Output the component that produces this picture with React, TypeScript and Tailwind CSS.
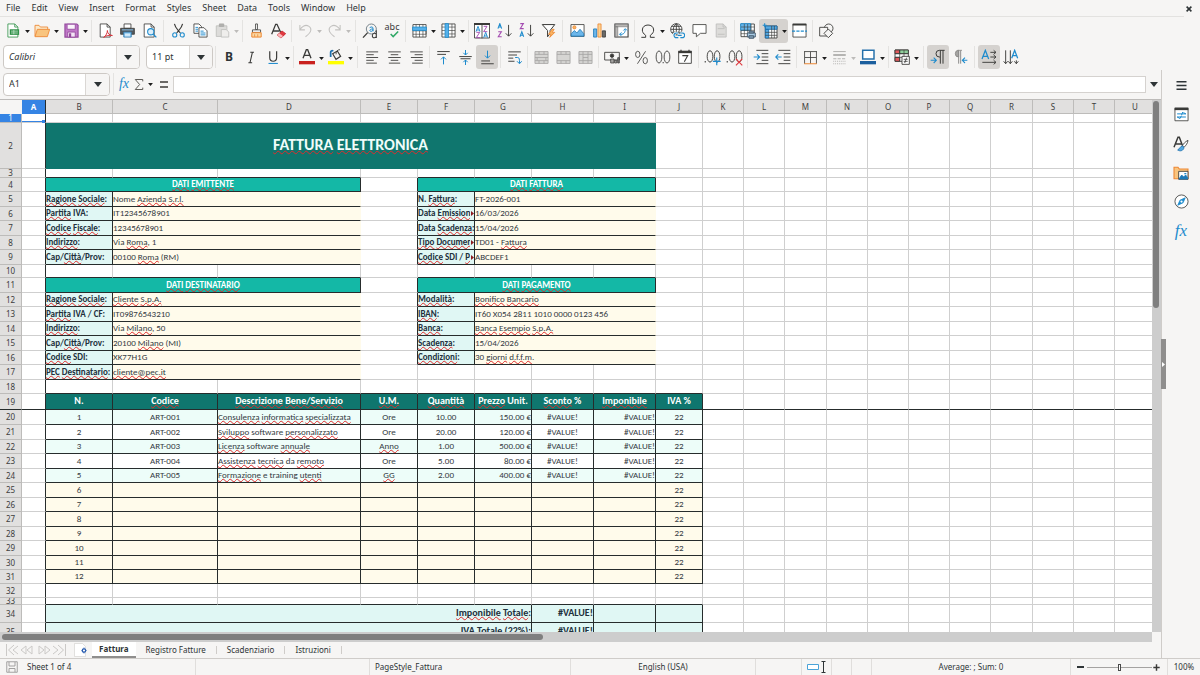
import React from 'react';

const INK = '#3a3a38';
const BLUE = '#1e8bcd';
const DIM = '#bdbcba';

function Svg({ children, className = 'size-[15px]' }: { children: React.ReactNode; className?: string }) {
  return (
    <svg viewBox="0 0 24 24" className={className} fill="none" stroke={INK} strokeWidth="1.3" aria-hidden="true">
      {children}
    </svg>
  );
}

/* ---------- standard toolbar icons ---------- */

const NewDoc = () => (
  <Svg>
    <path d="M3 1.500h11l5 5v16H3z" fill="#fff" stroke="#309048" />
    <path d="M14 1.500v5h5" stroke="#309048" />
    <path d="M6 10h15v9H6z" fill="#309048" stroke="none" />
    <path d="M8 13h11M8 16h11M12.500 11v7" stroke="#bfe3c8" />
  </Svg>
);
const OpenDoc = () => (
  <Svg className="size-[16px]">
    <path d="M1.500 20V3.500h6l2 2.500h11v4" fill="#fbe9c9" stroke="#ed8733" />
    <path d="M1.500 20.500 5 9.500h18.500l-3.500 11z" fill="#f9c47e" stroke="#ed8733" />
  </Svg>
);
const SaveDoc = () => (
  <Svg>
    <path d="M1.500 1.500h19l2 2v19h-21z" fill="#c078c8" stroke="#92479b" strokeWidth="1.800" />
    <path d="M5 2h13v8H5z" fill="#fbf4fc" stroke="#92479b" />
    <path d="M6 14.500h12v8H6z" fill="#f4e5f6" stroke="#92479b" />
    <path d="M8 16.500h3.500v6H8z" fill="#92479b" stroke="none" />
  </Svg>
);
const Pdf = () => (
  <Svg>
    <path d="M3.500 1.500h11l5 5v16h-16z" fill="#fff" />
    <path d="M14.500 1.500v5h5" />
    <path d="M9 23c4-3 6-7 6-11 0 4 3 8 8 8-5-1-10 0-14 3z" stroke="#d8343c" strokeWidth="1.600" fill="#fff" />
  </Svg>
);
const Print = () => (
  <Svg>
    <path d="M6.500 1.500h11v7h-11z" fill="#fff" />
    <path d="M1 8.500h22v9.500H1z" fill="#54595e" />
    <path d="M3 11h18" stroke="#8bc5ee" strokeWidth="1.500" />
    <path d="M6 14.500h12v8H6z" fill="#8ec8f0" stroke="#2b78ad" />
    <path d="M8 18h8M8 20.500h8" stroke="#fff" />
  </Svg>
);
const Preview = () => (
  <Svg>
    <path d="M3.500 1.500h11l5 5v16h-16z" fill="#fff" />
    <path d="M14.500 1.500v5h5" />
    <circle cx="14" cy="14" r="5" stroke={BLUE} fill="#dceefa" strokeWidth="1.700" />
    <path d="m18 18 5 5" stroke={BLUE} strokeWidth="2" />
  </Svg>
);
const Cut = () => (
  <Svg>
    <path d="M5.500 1.500c1 6 5 9 9.500 14.500M18.500 1.500c-1 6-5 9-9.500 14.500" strokeWidth="1.800" />
    <circle cx="6" cy="19" r="3.300" stroke={BLUE} strokeWidth="1.700" />
    <circle cx="18" cy="19" r="3.300" stroke={BLUE} strokeWidth="1.700" />
  </Svg>
);
const Copy = () => (
  <Svg>
    <path d="M1.500 1.500h8l4 4v11h-12z" fill="#fff" />
    <path d="M9.500 7.500h8l5 5v10h-13z" fill="#fff" />
    <path d="M4 7h4M4 10h4M4 13h4M12 13h5M12 16h8M12 19h8" stroke={BLUE} strokeWidth="1.500" />
  </Svg>
);
const Paste = () => (
  <Svg>
    <path d="M2 4.500h17v17H2z" fill="#dddcda" stroke={DIM} />
    <path d="M7 1.500h7v4H7z" fill="#b2b1af" stroke="#a9a8a6" />
    <path d="M10 10.500h8l4 4v8H10z" fill="#efeeec" stroke={DIM} />
  </Svg>
);
const Brush = () => (
  <Svg>
    <path d="M10.500 1.500h3v9h-3z" fill="#fff" />
    <path d="M5.500 11h13v4h-13z" fill="#fff" />
    <path d="M4.500 15.500h15v7h-15z" fill="#fbd9a5" stroke="#ed8733" strokeWidth="1.600" />
    <path d="M9 18v4M14 18v4" stroke="#ed8733" />
  </Svg>
);
const ClearFmt = () => (
  <Svg className="size-[16px]">
    <path d="M2.500 17 8.500 2h2L16 14M5 12h9" strokeWidth="1.900" />
    <path d="m11 18 7-6 5.500 4-7 6.500z" fill="#e0393f" stroke="#c9252d" />
    <path d="m11 18 3-2.500 5.500 4-3 3z" fill="#fbb9bb" stroke="none" />
  </Svg>
);
const Undo = () => (
  <Svg>
    <path d="M3 3v8h8M3 11C6 5 12 2 17 5s6 9-5 17" stroke="#c3c2c0" strokeWidth="1.700" />
  </Svg>
);
const Redo = () => (
  <Svg>
    <path d="M21 3v8h-8M21 11C18 5 12 2 7 5s-6 9 5 17" stroke="#c3c2c0" strokeWidth="1.700" />
  </Svg>
);
const FindReplace = () => (
  <Svg className="size-[16px]">
    <circle cx="14" cy="9" r="7.500" stroke="#66747c" />
    <path d="M8.500 14.500 1.500 22" strokeWidth="2" />
    <path d="M11.500 7c3-2 5-1 5 1v4.500M16.500 9c-5-.500-6 3.500-3 3.500 1.500 0 3-1 3-2.500" stroke={BLUE} strokeWidth="1.500" />
    <path d="M21.500 11v11.500M21.500 18c0-4-6-3.500-6 1s6 4 6 0" strokeWidth="1.600" />
  </Svg>
);
const Spell = () => (
  <span className="flex flex-col items-center leading-none">
    <span className="text-[9px] leading-[8px] text-[#3a3a38]">abc</span>
    <svg viewBox="0 0 12 8" className="h-[7px] w-[10px] self-end" fill="none" stroke="#2fa866" strokeWidth="1.800" aria-hidden="true">
      <path d="m2 3.500 3 3 6-6" />
    </svg>
  </span>
);
const RowIcon = () => (
  <Svg>
    <path d="M1.500 2.500h21v20h-21z" fill="#fff" />
    <path d="M1.500 12.500h21v5.500h-21M6.500 2.500v20M12 2.500v20M17.500 2.500v20" strokeWidth="1" />
    <path d="M1 6.500h22V12H1z" fill="#55b0ea" stroke={BLUE} />
  </Svg>
);
const ColIcon = () => (
  <Svg>
    <path d="M1.500 1.500h21v21h-21z" fill="#fff" />
    <path d="M1.500 6.500h21M1.500 12h21M1.500 17.500h21M17.500 1.500v21" strokeWidth="1" />
    <path d="M6.500 1h5.500v22H6.500z" fill="#55b0ea" stroke={BLUE} />
  </Svg>
);
const letterA = (x: number, y: number) => `M${x} ${y + 8}l3-8 3 8M${x + 1} ${y + 5.5}h4`;
const letterZ = (x: number, y: number) => `M${x} ${y}h5l-5 8h5.500`;
const SortIcon = () => (
  <Svg className="size-[16px]">
    <path d="M.700 1.500h22.600v21H.700zM12 2v21" fill="#fff" />
    <path d="M0 1.500h24" strokeWidth="3" />
    <path d={letterA(3, 5)} stroke={BLUE} strokeWidth="1.400" />
    <path d={letterZ(3.5, 14)} stroke="#a34ab0" strokeWidth="1.400" />
    <path d={letterZ(14.5, 5)} stroke="#a34ab0" strokeWidth="1.400" />
    <path d={letterA(14.5, 14)} stroke={BLUE} strokeWidth="1.400" />
  </Svg>
);
const SortAsc = () => (
  <Svg>
    <path d={letterA(1.5, 1)} stroke={BLUE} strokeWidth="1.700" />
    <path d={letterZ(2, 14)} stroke="#a34ab0" strokeWidth="1.700" />
    <path d="M18.500 3v18M14 16.500l4.500 4.500 4.500-4.500" strokeWidth="1.500" />
  </Svg>
);
const SortDesc = () => (
  <Svg>
    <path d={letterZ(2, 1)} stroke="#a34ab0" strokeWidth="1.700" />
    <path d={letterA(1.5, 14)} stroke={BLUE} strokeWidth="1.700" />
    <path d="M18.500 3v18M14 16.500l4.500 4.500 4.500-4.500" strokeWidth="1.500" />
  </Svg>
);
const Filter = () => (
  <Svg>
    <path d="M2 2.500h20L14.500 12v5l-4 5V12z" fill="#fff" strokeWidth="1.600" />
    <path d="m18 10-6 8h4l-2 5 8-8h-4l3-5z" fill="#f9b563" stroke="#ed8733" />
  </Svg>
);
const Picture = () => (
  <Svg>
    <path d="M1.500 2.500h21v19h-21z" fill="#fff" />
    <circle cx="7" cy="7" r="2.500" fill="#f9b563" stroke="#ed8733" />
    <path d="M2 21v-4l5-5 4 4 5-6 6 7v4z" fill="#6cb6ea" stroke="#1c79b8" />
  </Svg>
);
const Chart = () => (
  <Svg>
    <path d="M2.500 9.500h5v13h-5z" fill="#6cb6ea" stroke="#1c79b8" />
    <path d="M9.500 1.500h5v21h-5z" fill="#fbd292" stroke="#ed8733" />
    <path d="M16.500 12.500h5v10h-5z" fill="#6c6a68" />
  </Svg>
);
const Pivot = () => (
  <Svg>
    <path d="M1.500 1.500h21v21h-21z" fill="#fff" strokeWidth="1.700" />
    <path d="M2 2h20v4H2zM2 6h4v16H2z" fill="#b9b7b5" stroke="#777" strokeWidth="1" />
    <path d="M9 18c6 1 9-2 9-8M15 12l3-3 3 3M12 15l-3 3 3 3" stroke={BLUE} strokeWidth="1.500" />
  </Svg>
);
const Omega = () => (
  <Svg className="size-[16px]">
    <path d="M2 21.500h6.500v-3C5 16 3.500 13.500 3.500 10.500c0-10 17-10 17 0 0 3-1.500 5.500-5 8v3H22" strokeWidth="1.500" />
  </Svg>
);
const LinkIcon = () => (
  <Svg className="size-[16px]">
    <circle cx="11" cy="9.500" r="8.500" fill="#fff" />
    <path d="M2.500 9.500h17M11 1v16M11 1C5 6 5 13 11 18M11 1c6 5 6 12 0 17M4 5h14M4 14h14" />
    <path d="M14 15h-3a3.500 3.500 0 0 0 0 7h3M17 15h3a3.500 3.500 0 0 1 0 7h-3M13 18.500h6" stroke="#f6f5f4" strokeWidth="4" />
    <path d="M14 15h-3a3.500 3.500 0 0 0 0 7h3M17 15h3a3.500 3.500 0 0 1 0 7h-3M13 18.500h6" stroke={BLUE} strokeWidth="1.700" />
  </Svg>
);
const Comment = () => (
  <Svg>
    <path d="M1.500 2.500h21v14h-9L7 22v-5.500H1.500z" fill="#fff" />
  </Svg>
);
const HeaderFooter = () => (
  <Svg>
    <path d="M3.500 1.500h11l5 5v16h-16z" fill="#dddcda" stroke={DIM} />
    <path d="M14.500 1.500v5h5M6 18h11M6 9h11" stroke={DIM} />
  </Svg>
);
const PrintArea = () => (
  <Svg className="size-[16px]">
    <path d="M1.500 1.500h20v19h-20z" fill="#fff" />
    <path d="M1 1h15v10H1z" fill="#68b5ea" stroke={BLUE} />
    <path d="M1.500 6h20M1.500 11h20M1.500 16h20M6.500 1.500v19M11.500 1.500v19M16.500 1.500v19" strokeWidth=".9" />
    <path d="M11 15h12v6H11zM13.500 12.500h7V15h-7zM13.500 19h7v4h-7z" fill="#a9cce5" stroke="#41566a" />
  </Svg>
);
const Freeze = () => (
  <Svg className="size-[16px]">
    <path d="M5 4.500h17.500v18H5z" fill="#fff" />
    <path d="M5 4.500h17.500v5H5zM5 9.500h5v13H5z" fill="#55a9e2" stroke="#1c6fae" />
    <path d="M5 14h17.500M5 18.500h17.500M14.500 4.500v18M18.500 4.500v18" strokeWidth="1" />
    <path d="M1 3.500h6M4 .500v6" stroke={BLUE} strokeWidth="1.600" />
  </Svg>
);
const Split = () => (
  <Svg>
    <path d="M1.500 2h21v20.500h-21z" fill="#fff" />
    <path d="M1 2.500h22" strokeWidth="3" />
    <path d="M0 13h24" stroke={BLUE} strokeWidth="2" strokeDasharray="5 2" />
  </Svg>
);
const Shapes = () => (
  <Svg className="size-[16px]">
    <circle cx="16" cy="8" r="6.500" fill="#f6f5f4" />
    <path d="M2.500 6.500h12v13h-12z" fill="#f6f5f4" />
    <path d="m15.500 9 6.500 6.500-6.500 6.500L9 15.500z" fill="#f6f5f4" />
  </Svg>
);

/* ---------- formatting toolbar icons ---------- */

const Bold = () => <span className="text-[12px] leading-none font-bold text-[#2e3436]">B</span>;
const Italic = () => (
  <Svg>
    <path d="M10 3.500h6M7 20.500h6M13.500 3.500l-4 17" strokeWidth="1.700" />
  </Svg>
);
const Underline = () => (
  <Svg>
    <path d="M6 2v10c0 8 11 8 11 0V2" strokeWidth="1.900" />
    <path d="M4 21.500h15" stroke={BLUE} strokeWidth="1.700" />
  </Svg>
);
const FontColor = () => (
  <Svg className="size-[16px]">
    <path d="m6 14 5-13h2l5 13M8 9.500h8" strokeWidth="2" />
    <path d="M0 18h24v5H0z" fill="#c9211e" stroke="none" />
  </Svg>
);
const Highlight = () => (
  <Svg className="size-[16px]">
    <path d="m7 7 7-4 5 8-7 4.500z" fill="#f4f4f4" strokeWidth="1.700" />
    <path d="M4 12V5c0-2 1.500-3 4-2" stroke="#1c6fae" strokeWidth="2.600" />
    <path d="M12 8c0-4 2-7 6-7" />
    <path d="M0 18h24v5H0z" fill="#ffff00" stroke="none" />
  </Svg>
);
const Lines = ({ d }: { d: string }) => (
  <Svg>
    <path d={d} strokeWidth="1.400" />
  </Svg>
);
const AlignL = () => <Lines d="M2 3h19M2 7.500h12M2 12h19M2 16.500h12M2 21h17" />;
const AlignC = () => <Lines d="M2 3h20M6 7.500h12M2 12h20M6 16.500h12M3 21h18" />;
const AlignR = () => <Lines d="M2 3h20M9 7.500h13M3 12h19M9 16.500h13M5 21h17" />;
const VTop = () => (
  <Svg>
    <path d="M2 2.500h20M2 7h14" strokeWidth="1.500" />
    <path d="M12 23V11M8 15l4-4 4 4" stroke={BLUE} strokeWidth="1.600" />
  </Svg>
);
const VMid = () => (
  <Svg>
    <path d="M2 10.500h20M4 14h16" strokeWidth="1.500" />
    <path d="M12 0v8M8.500 4.500 12 8l3.500-3.500M12 24v-8M8.500 19.500 12 16l3.500 3.500" stroke={BLUE} strokeWidth="1.600" />
  </Svg>
);
const VBot = () => (
  <Svg>
    <path d="M2 22h20M2 17.500h14" strokeWidth="1.500" />
    <path d="M12 1v12M8 9l4 4 4-4" stroke={BLUE} strokeWidth="1.600" />
  </Svg>
);
const Wrap = () => (
  <Svg>
    <path d="M2 3h20M2 8h14M2 13h8M2 18h10" strokeWidth="1.500" />
    <path d="M13 12h4c3 0 3 3 3 9M16 18l4 4 3.500-4" stroke={BLUE} strokeWidth="1.600" />
  </Svg>
);
const Merge = ({ d }: { d: string }) => (
  <Svg>
    <path d="M1.500 2.500h21v19h-21z" fill="#d6d5d3" stroke="#a5a4a2" />
    <path d={d} stroke="#a5a4a2" />
  </Svg>
);
const Currency = () => (
  <Svg className="size-[16px]">
    <path d="M1 5h22v11.500H1z" fill="#f6f5f4" strokeWidth="1.300" />
    <circle cx="12" cy="10" r="2.600" fill={INK} />
    <path d="M10 15h5v6h-5zM16 17h3v4h-3z" fill="#a5a4a2" strokeWidth="1.100" />
    <path d="M20.500 13h2.500v8h-2.500z" fill="#777" strokeWidth="1.100" />
  </Svg>
);
const Percent = () => (
  <Svg>
    <ellipse cx="6" cy="7" rx="3.500" ry="5" />
    <ellipse cx="18" cy="17" rx="3.500" ry="5" />
    <path d="M18.500 2 5.500 22" />
  </Svg>
);
const Zeros = () => (
  <Svg className="size-[16px]">
    <ellipse cx="6" cy="12" rx="4.300" ry="9" />
    <ellipse cx="18" cy="12" rx="4.300" ry="9" />
    <path d="M11.500 20.500h1.500" strokeWidth="2" />
  </Svg>
);
const DateIcon = () => (
  <Svg className="size-[16px]">
    <path d="M2.500 3.500h19v18h-19z" fill="#fff" />
    <path d="M2 4.500h20" strokeWidth="3.500" />
    <path d="M6 1v5M18 1v5" strokeWidth="1.800" />
    <path d="M8 10h8l-5 9" strokeWidth="1.700" />
  </Svg>
);
const Decimals = ({ add }: { add: boolean }) => (
  <Svg className="size-[17px]">
    <path d="M1 18h1.500" strokeWidth="2" />
    <ellipse cx="8.500" cy="10.500" rx="4" ry="8" />
    <ellipse cx="18.500" cy="10.500" rx="4" ry="8" />
    {add ? (
      <path d="M18 12v11M12.500 17.500h11" stroke={BLUE} strokeWidth="1.600" />
    ) : (
      <path d="m14 14 9 9M23 14l-9 9" stroke="#e0393f" strokeWidth="1.600" />
    )}
  </Svg>
);
const IndentMore = () => (
  <Svg className="size-[16px]">
    <path d="M5 2h18M13 7h10M13 12h10M13 17h10M5 22h18" strokeWidth="1.400" />
    <path d="M1 12h9M6 8l4 4-4 4" stroke={BLUE} strokeWidth="1.600" />
  </Svg>
);
const IndentLess = () => (
  <Svg className="size-[16px]">
    <path d="M5 2h18M13 7h10M13 12h10M13 17h10M5 22h18" strokeWidth="1.400" />
    <path d="M10 12H1M5 8l-4 4 4 4" stroke={BLUE} strokeWidth="1.600" />
  </Svg>
);
const Borders = () => (
  <Svg>
    <path d="M2.500 2v20M21.500 2v20M2 2.500h20" />
    <path d="M12 3v19M3 12h18" />
    <path d="M2 22h20" stroke="#ed8733" strokeWidth="1.600" />
  </Svg>
);
const BorderStyle = () => (
  <Svg>
    <path d="M2 2.500h20" stroke="#b0afad" strokeWidth="1.500" />
    <path d="M2 8h20" stroke="#b0afad" strokeWidth="3" />
    <path d="M2 14h20" stroke="#b0afad" strokeWidth="1.500" strokeDasharray="5 2" />
    <path d="M2 18h20M2 22h20" stroke="#b0afad" strokeWidth="1.500" strokeDasharray="1.500 1.500" />
  </Svg>
);
const BorderColor = () => (
  <Svg className="size-[16px]">
    <path d="M4 2h17v13H4z" fill="#fff" stroke="#2470ab" strokeWidth="2.200" />
    <path d="M0 18h24v5H0z" fill="#1c5f9e" stroke="none" />
  </Svg>
);
const Conditional = () => (
  <Svg className="size-[16px]">
    <path d="M1.500 1.500h20v17h-20z" fill="#fff" />
    <path d="M1.500 1.500h7v5.500h-7zM1.500 12.500h7v6h-7z" fill="#e0575b" />
    <path d="M8.500 1.500h13V7h-13z" fill="#8fcf9c" />
    <path d="M1.500 7h20M1.500 12.500h20M8.500 1.500v17M15 1.500v17" strokeWidth="1" />
    <path d="M12 11h11v12H12z" fill="#fff" />
    <path d="M14.500 15.500h6M14.500 18.500h6M19 13l-3 8" strokeWidth="1.200" />
  </Svg>
);
const Ltr = () => (
  <Svg className="size-[16px]">
    <path d="M22 2h-8a5 5 0 0 0 0 10h1M15.500 2v20M19.500 2v20" strokeWidth="1.500" />
    <path d="M1 17h8M5.500 13l4 4-4 4" stroke={BLUE} strokeWidth="1.600" />
  </Svg>
);
const Rtl = () => (
  <Svg className="size-[16px]">
    <path d="M10 2a5 5 0 0 0 0 10zM10 2v20M13 2v20" fill="#a5a4a2" stroke="#8e8d8b" strokeWidth="1.500" />
    <path d="M8 2h7" stroke="#8e8d8b" />
    <path d="M23 17h-7M19.500 13l-4 4 4 4" stroke={BLUE} strokeWidth="1.600" />
  </Svg>
);
const TextHoriz = () => (
  <Svg className="size-[16px]">
    <path d="m1.500 15 5-13 5 13M3.500 11h6" stroke={BLUE} strokeWidth="1.900" />
    <path d="M14 5h8M19 2l3.500 3L19 8M14 12h8M19 9l3.500 3-3.500 3M2 20h20M19 17l3.500 3-3.500 3" strokeWidth="1.400" />
  </Svg>
);
const TextVert = () => (
  <Svg className="size-[16px]">
    <path d="m13 14 4.500-12L22 14M14.500 10h6" stroke={BLUE} strokeWidth="1.900" />
    <path d="M4 2v20M1 18.500 4 22l3-3.500M11 2v20M8 18.500l3 3.500 3-3.500M20 17v5M17 18.500l3 3.500 3-3.500" strokeWidth="1.400" />
  </Svg>
);

/* ---------- shared controls ---------- */

const Caret = ({ dim = false }: { dim?: boolean }) => (
  <svg viewBox="0 0 8 5" className="h-[3px] w-[5px]" fill={dim ? '#bdbcba' : '#1d1d1d'} aria-hidden="true">
    <path d="M0 0h8L4 5z" />
  </svg>
);
const BigCaret = () => (
  <svg viewBox="0 0 8 5" className="h-[5px] w-[8px]" fill="#2e3436" aria-hidden="true">
    <path d="M0 0h8L4 5z" />
  </svg>
);

function Tool({ label, icon, on = false, menu = false, dim = false }: { label: string; icon: React.ReactNode; on?: boolean; menu?: boolean; dim?: boolean }) {
  return (
    <div className={on ? 'flex h-[24px] rounded-[3px] bg-[#d5d2cf]' : 'flex h-[24px]'}>
      <button type="button" aria-label={label} className="flex w-[22px] items-center justify-center">
        {icon}
      </button>
      {menu && (
        <button type="button" aria-label={label + ' options'} className="flex w-[7px] items-center justify-center pt-[2px]">
          <Caret dim={dim} />
        </button>
      )}
    </div>
  );
}
function Sep({ wide = false }: { wide?: boolean }) {
  return (
    <div className={wide ? 'flex w-[7px] justify-center' : 'flex w-[5px] justify-center'}>
      <div className="h-[22px] w-px bg-[#e4e3e1]" />
    </div>
  );
}

const MENUS = ['File', 'Edit', 'View', 'Insert', 'Format', 'Styles', 'Sheet', 'Data', 'Tools', 'Window', 'Help'];

function MenuBar() {
  return (
    <div className="flex h-[17px] items-start justify-between">
      <nav className="flex h-full flex-1 gap-[11px] border-b border-[#e3e2e0] pl-[6px]">
        {MENUS.map((m) => (
          <button key={m} type="button" className="text-[9px] leading-[16px]">
            {m}
          </button>
        ))}
      </nav>
      <button type="button" aria-label="Close document" className="flex h-[17px] w-[16px] items-center justify-start">
        <svg viewBox="0 0 10 10" className="ml-[2px] size-[6px]" stroke="#2e3436" strokeWidth="2.600" aria-hidden="true">
          <path d="m1 1 8 8M9 1 1 9" />
        </svg>
      </button>
    </div>
  );
}

function StandardBar() {
  return (
    <div className="flex h-[27px] items-center pl-[2px]">
      <Tool label="New" icon={<NewDoc />} menu />
      <Tool label="Open" icon={<OpenDoc />} menu />
      <Tool label="Save" icon={<SaveDoc />} menu />
      <Sep />
      <Tool label="Export as PDF" icon={<Pdf />} />
      <Tool label="Print" icon={<Print />} />
      <Tool label="Print preview" icon={<Preview />} />
      <Sep wide />
      <Tool label="Cut" icon={<Cut />} />
      <Tool label="Copy" icon={<Copy />} />
      <Tool label="Paste" icon={<Paste />} menu dim />
      <Sep />
      <Tool label="Clone formatting" icon={<Brush />} />
      <Tool label="Clear formatting" icon={<ClearFmt />} />
      <Sep />
      <Tool label="Undo" icon={<Undo />} menu dim />
      <Tool label="Redo" icon={<Redo />} menu dim />
      <Sep wide />
      <Tool label="Find and replace" icon={<FindReplace />} />
      <Tool label="Spelling" icon={<Spell />} />
      <Sep />
      <Tool label="Row" icon={<RowIcon />} menu />
      <Tool label="Column" icon={<ColIcon />} menu />
      <Sep />
      <Tool label="Sort" icon={<SortIcon />} />
      <Tool label="Sort ascending" icon={<SortAsc />} />
      <Tool label="Sort descending" icon={<SortDesc />} />
      <Tool label="AutoFilter" icon={<Filter />} />
      <Sep wide />
      <Tool label="Image" icon={<Picture />} />
      <Tool label="Chart" icon={<Chart />} />
      <Tool label="Pivot table" icon={<Pivot />} />
      <Sep />
      <Tool label="Special character" icon={<Omega />} menu />
      <Tool label="Hyperlink" icon={<LinkIcon />} />
      <Tool label="Comment" icon={<Comment />} />
      <Tool label="Headers and footers" icon={<HeaderFooter />} />
      <Sep />
      <Tool label="Print area" icon={<PrintArea />} />
      <Tool label="Freeze rows and columns" icon={<Freeze />} menu on />
      <Tool label="Split window" icon={<Split />} />
      <Sep />
      <Tool label="Draw functions" icon={<Shapes />} />
    </div>
  );
}

function Combo({ label, value, box, text }: { label: string; value: string; box: string; text: string }) {
  return (
    <div className={'relative flex h-[24px] rounded-[4px] border border-[#cdc9c5] bg-white ' + box}>
      <select aria-label={label} defaultValue={value} className={'w-full appearance-none bg-transparent pl-[5px] text-[9px] outline-none ' + text}>
        <option>{value}</option>
      </select>
      <span className="pointer-events-none absolute inset-y-0 right-0 flex w-[23px] items-center justify-center rounded-r-[3px] border-l border-[#dad7d4] bg-[#f6f5f4]">
        <BigCaret />
      </span>
    </div>
  );
}

function FormatBar() {
  return (
    <div className="flex h-[26px] items-center pl-[3px]">
      <Combo label="Font name" value="Calibri" box="w-[137px]" text="italic" />
      <Combo label="Font size" value="11 pt" box="ml-[6px] w-[67px]" text="" />
      <Sep />
      <Tool label="Bold" icon={<Bold />} />
      <Tool label="Italic" icon={<Italic />} />
      <Tool label="Underline" icon={<Underline />} menu />
      <Sep />
      <Tool label="Font colour" icon={<FontColor />} menu />
      <Tool label="Highlighting" icon={<Highlight />} menu />
      <Sep wide />
      <Tool label="Align left" icon={<AlignL />} />
      <Tool label="Align centre" icon={<AlignC />} />
      <Tool label="Align right" icon={<AlignR />} />
      <Sep />
      <Tool label="Align top" icon={<VTop />} />
      <Tool label="Centre vertically" icon={<VMid />} />
      <Tool label="Align bottom" icon={<VBot />} on />
      <Sep />
      <Tool label="Wrap text" icon={<Wrap />} />
      <Sep />
      <Tool label="Merge and centre" icon={<Merge d="M1.500 7h21M1.500 12h21M1.500 17h21M8 2.500V7M16 2.500V7M8 17v4.500M16 17v4.500M5 12v5M19 12v5" />} />
      <Tool label="Merge cells" icon={<Merge d="M1.500 7h21M1.500 17h21M8 2.500V7M16 2.500V7M8 17v4.500M16 17v4.500" />} />
      <Tool label="Unmerge cells" icon={<Merge d="M1.500 7h21M1.500 17h21M8 2.500v19M16 2.500v19M8 12h8" />} />
      <Sep />
      <Tool label="Currency" icon={<Currency />} menu />
      <Tool label="Percent" icon={<Percent />} />
      <Tool label="Number" icon={<Zeros />} />
      <Tool label="Date" icon={<DateIcon />} />
      <Sep />
      <Tool label="Add decimal place" icon={<Decimals add />} />
      <Tool label="Delete decimal place" icon={<Decimals add={false} />} />
      <Sep />
      <Tool label="Increase indent" icon={<IndentMore />} />
      <Tool label="Decrease indent" icon={<IndentLess />} />
      <Sep />
      <Tool label="Borders" icon={<Borders />} menu />
      <Tool label="Border style" icon={<BorderStyle />} menu dim />
      <Tool label="Border colour" icon={<BorderColor />} menu />
      <Sep />
      <Tool label="Conditional formatting" icon={<Conditional />} menu />
      <Sep wide />
      <Tool label="Left to right" icon={<Ltr />} on />
      <Tool label="Right to left" icon={<Rtl />} />
      <Sep wide />
      <Tool label="Text direction horizontal" icon={<TextHoriz />} on />
      <Tool label="Text direction vertical" icon={<TextVert />} />
    </div>
  );
}

function FormulaBar() {
  return (
    <div className="flex h-[30px] items-center border-b border-[#bdbbb9] pb-px pl-[3px]">
      <div className="flex h-[23px] w-[107px] rounded-[4px] border border-[#cdc9c5] bg-white">
        <input aria-label="Name box" defaultValue="A1" className="w-full min-w-0 flex-1 rounded-l-[4px] pl-[5px] text-[9px] outline-none" />
        <button type="button" aria-label="Name list" className="flex w-[24px] items-center justify-center rounded-r-[3px] border-l border-[#dad7d4] bg-[#f6f5f4]">
          <BigCaret />
        </button>
      </div>
      <Sep wide />
      <button type="button" aria-label="Function wizard" className="w-[14px] font-['Liberation_Serif',serif] text-[14px] leading-none text-[#1e8bcd] italic">
        fx
      </button>
      <button type="button" aria-label="Select function" className="flex w-[24px] items-center justify-center gap-[4px]">
        <svg viewBox="0 0 16 20" className="h-[13px] w-[10px]" fill="none" stroke="#55534f" strokeWidth="1.500" aria-hidden="true">
          <path d="M14 5V2H2l7 8-7 8h12v-3" />
        </svg>
        <Caret />
      </button>
      <button type="button" aria-label="Formula" className="flex w-[18px] flex-col items-center gap-[3px]">
        <span className="h-[2px] w-[8px] bg-[#6b6966]" />
        <span className="h-[2px] w-[8px] bg-[#6b6966]" />
      </button>
      <input aria-label="Formula input" className="h-[17px] min-w-0 flex-1 border border-[#d5d2cf] bg-white px-[4px] text-[9px] outline-none" />
      <button type="button" aria-label="Expand formula bar" className="flex w-[15px] items-center justify-center">
        <BigCaret />
      </button>
    </div>
  );
}

/* ---------- spreadsheet ---------- */

const COLS: [string, string][] = [
  ['A', 'w-[24px]'], ['B', 'w-[67px]'], ['C', 'w-[105px]'], ['D', 'w-[143px]'], ['E', 'w-[57px]'],
  ['F', 'w-[57px]'], ['G', 'w-[57px]'], ['H', 'w-[62px]'], ['I', 'w-[62px]'], ['J', 'w-[47px]'],
  ['K', 'w-[41px]'], ['L', 'w-[41px]'], ['M', 'w-[42px]'], ['N', 'w-[41px]'], ['O', 'w-[41px]'],
  ['P', 'w-[41px]'], ['Q', 'w-[41px]'], ['R', 'w-[42px]'], ['S', 'w-[41px]'], ['T', 'w-[41px]'], ['U', 'w-[41px]'],
];

const HEIGHTS: Record<number, [string, string]> = {
  7: ['h-[7px]', 'h-[6px]'],
  9: ['h-[9px]', 'h-[8px]'],
  13: ['h-[13px]', 'h-[12px]'],
  14: ['h-[14px]', 'h-[13px]'],
  15: ['h-[15px]', 'h-[14px]'],
  16: ['h-[16px]', 'h-[15px]'],
  18: ['h-[18px]', 'h-[17px]'],
  46: ['h-[46px]', 'h-[45px]'],
};
const ROW_HEIGHTS = [
  9, 46, 9, 14, 15, 14, 15, 14, 15, 13, 15, 14, 15, 14, 15, 14, 15, 14, 16, 15, 15, 14, 15, 14, 15, 14, 15, 14, 15,
  14, 14, 14, 7, 18, 18,
];

type Cell = { text?: string; look: string; span?: number; edge?: 'value' | 'banner'; more?: boolean };
const CELLS: Record<string, Cell> = {};

CELLS['2B'] = { text: '[FATTURA] [ELETTRONICA]', look: 'justify-center text-[16px] font-bold text-[#f0fdfa] bg-[#0f766e]', span: 8, edge: 'banner' };

const SECTION = 'justify-center text-[9px] font-bold text-white bg-[#14b8a6]';
const LABEL = 'text-[9px] font-bold text-[#22303c] bg-[#e0f7f4]';
const VALUE = 'text-[9px] text-[#333a42] bg-[#fffbeb]';

function section(row: number, labelCol: string, valueCol: string, span: number, title: string, items: [string, string, boolean?][]) {
  CELLS[row + labelCol] = { text: title, look: SECTION, span: span + 1 };
  items.forEach(([label, value, more], i) => {
    CELLS[row + 1 + i + labelCol] = { text: label, look: LABEL, more };
    CELLS[row + 1 + i + valueCol] = { text: value, look: VALUE, span, edge: 'value' };
  });
}

section(4, 'B', 'C', 2, '[DATI] [EMITTENTE]', [
  ['[Ragione] [Sociale]:', 'Nome [Azienda] [S.r.l.]'],
  ['[Partita] IVA:', 'IT12345678901'],
  ['[Codice] [Fiscale]:', '12345678901'],
  ['[Indirizzo]:', 'Via [Roma], 1'],
  ['Cap/[Città]/Prov:', '00100 [Roma] (RM)'],
]);
section(4, 'F', 'G', 3, '[DATI] [FATTURA]', [
  ['N. [Fattura]:', 'FT-2026-001'],
  ['Data [Emissione]', '16/03/2026', true],
  ['Data [Scadenza]:', '15/04/2026'],
  ['[Tipo] [Document]', 'TD01 - [Fattura]', true],
  ['[Codice] SDI / [PE]', 'ABCDEF1', true],
]);
section(11, 'B', 'C', 2, '[DATI] [DESTINATARIO]', [
  ['[Ragione] [Sociale]:', '[Cliente] [S.p.A.]'],
  ['[Partita] IVA / CF:', 'IT09876543210'],
  ['[Indirizzo]:', 'Via [Milano], 50'],
  ['Cap/[Città]/Prov:', '20100 [Milano] (MI)'],
  ['[Codice] SDI:', 'XK77H1G'],
  ['[PEC] [Destinatario]:', '[cliente@pec.it]'],
]);
section(11, 'F', 'G', 3, '[DATI] [PAGAMENTO]', [
  ['[Modalità]:', '[Bonifico] [Bancario]'],
  ['[IBAN]:', 'IT60 X054 2811 1010 0000 0123 456'],
  ['[Banca]:', '[Banca] [Esempio] [S.p.A.]'],
  ['[Scadenza]:', '15/04/2026'],
  ['[Condizioni]:', '30 [giorni] [d.f.f.m].'],
]);

const LINE_COLS = ['B', 'C', 'D', 'E', 'F', 'G', 'H', 'I', 'J'];
['N.', '[Codice]', '[Descrizione] [Bene/Servizio]', '[U.M.]', '[Quantità]', '[Prezzo] Unit.', '[Sconto] %', '[Imponibile]', 'IVA %'].forEach((t, i) => {
  CELLS['19' + LINE_COLS[i]] = { text: t, look: 'justify-center text-[10px] font-bold text-white bg-[#0f766e]' };
});
const ALIGN = ['justify-center', 'justify-center', '', 'justify-center', 'justify-center', 'justify-end', 'justify-center', 'justify-end', 'justify-center'];
const ITEMS = [
  ['ART-001', '[Consulenza] [informatica] [specializzata]', 'Ore', '10.00', '150.00 €'],
  ['ART-002', '[Sviluppo] software [personalizzato]', 'Ore', '20.00', '120.00 €'],
  ['ART-003', '[Licenza] software [annuale]', '[Anno]', '1.00', '500.00 €'],
  ['ART-004', '[Assistenza] [tecnica] da [remoto]', 'Ore', '5.00', '80.00 €'],
  ['ART-005', '[Formazione] e training [utenti]', '[GG]', '2.00', '400.00 €'],
];
for (let n = 1; n <= 12; n++) {
  const item = ITEMS[n - 1];
  const values = item ? [String(n), ...item, '#VALUE!', '#VALUE!', '22'] : [String(n), '', '', '', '', '', '', '', '22'];
  const bg = !item ? ' bg-[#fffbeb]' : n % 2 ? ' bg-[#edfdf9]' : ' bg-white';
  values.forEach((t, i) => {
    CELLS[19 + n + LINE_COLS[i]] = { text: t, look: ALIGN[i] + ' text-[9px] text-[#333a42]' + bg };
  });
}
const TOTAL = 'justify-end text-[10px] font-bold text-[#22303c] bg-[#e0f7f4]';
[['[Imponibile] [Totale]:', 34], ['IVA [Totale] (22%):', 35]].forEach(([t, r]) => {
  CELLS[r + 'B'] = { text: String(t), look: TOTAL, span: 6 };
  CELLS[r + 'H'] = { text: '#VALUE!', look: TOTAL };
  CELLS[r + 'I'] = { look: TOTAL };
  CELLS[r + 'J'] = { look: TOTAL };
});

/* Ranges drawn with dark borders: first row, last row, first column, last column. */
const BOXES = [[4, 9, 1, 3], [4, 9, 5, 8], [11, 17, 1, 3], [11, 16, 5, 8], [19, 31, 1, 9], [34, 35, 1, 9]];
const boxed = (r: number, c: number) => BOXES.some(([r1, r2, c1, c2]) => r >= r1 && r <= r2 && c >= c1 && c <= c2);

function bottomEdge(r: number, c: number) {
  if (r === 19 || boxed(r, c) || boxed(r + 1, c)) return 'border-b-[#262c2c]';
  if (r === 2 && c >= 1 && c <= 8) return 'border-b-[#0f766e]';
  return 'border-b-[#cfcfcf]';
}
function rightEdge(r: number, c: number, cell?: Cell) {
  if (cell?.edge === 'value') return 'border-r-[#fffbeb]';
  if (cell?.edge === 'banner') return 'border-r-[#0f766e]';
  if (c === 0 || boxed(r, c) || boxed(r, c + 1)) return 'border-r-[#262c2c]';
  return 'border-r-[#cfcfcf]';
}

function Spelled({ text }: { text: string }) {
  return (
    <span className="whitespace-pre">
      {text.split(/(\[[^\]]+\])/).map((part, i) =>
        part.startsWith('[') ? (
          <span key={i} className="underline decoration-[#e02b2b] decoration-wavy decoration-1 underline-offset-0 [text-decoration-skip-ink:none]">
            {part.slice(1, -1)}
          </span>
        ) : (
          part
        ),
      )}
    </span>
  );
}

function SheetRow({ r }: { r: number }) {
  const [outer, inner] = HEIGHTS[ROW_HEIGHTS[r - 1]];
  const cells: React.ReactNode[] = [];
  for (let c = 0; c < COLS.length; ) {
    const cell = CELLS[r + COLS[c][0]];
    const span = cell?.span ?? 1;
    const last = c + span - 1;
    cells.push(
      <td key={c} colSpan={span} className={'border-r border-b p-0 ' + bottomEdge(r, c) + ' ' + rightEdge(r, last, cell)}>
        {cell && (
          <div className={'relative flex items-center overflow-hidden pb-px leading-[12px] ' + inner + ' ' + cell.look}>
            {cell.text && <Spelled text={cell.text} />}
            {cell.more && (
              <span className="absolute inset-y-0 right-0 flex w-[4px] items-center justify-end bg-[#e0f7f4]">
                <svg viewBox="0 0 4 6" className="h-[5px] w-[3px] shrink-0" fill="#8f1d22" preserveAspectRatio="none" aria-hidden="true">
                  <path d="M0 0v6l4-3z" />
                </svg>
              </span>
            )}
          </div>
        )}
        {r === 1 && c === 0 && (
          <div className={'relative border-b border-[#3584e4] ' + inner}>
            <span className="absolute right-0 -bottom-[2px] size-[3px] bg-[#3584e4]" />
          </div>
        )}
      </td>,
    );
    c += span;
  }
  return (
    <tr className={outer}>
      <th
        scope="row"
        className={
          'border-r border-b p-0 font-normal ' +
          (r === 19 ? 'border-b-[#262c2c] border-r-[#bdbcba] ' : 'border-[#bdbcba] ') +
          (r === 1 ? 'bg-[#3584e4] font-bold text-white' : 'bg-[#e1e0df] text-[#3d3d3d]')
        }
      >
        <div className={"flex items-center justify-center overflow-hidden font-['Noto_Sans',sans-serif] text-[8px] leading-[8px] " + inner}>{r}</div>
      </th>
      {cells}
    </tr>
  );
}

function Sheet() {
  return (
    <table className="w-px table-fixed border-separate border-spacing-0 bg-white font-['Carlito','Lato',sans-serif]">
      <colgroup>
        <col className="w-[22px]" />
        {COLS.map(([name, w]) => (
          <col key={name} className={w} />
        ))}
      </colgroup>
      <thead>
        <tr className="h-[14px]">
          <td className="bg-[#f6f5f4] p-0" />
          {COLS.map(([name], i) => (
            <th
              key={name}
              scope="col"
              className={
                "border-r border-b p-0 font-['Noto_Sans',sans-serif] text-[8px] leading-[12px] " +
                (i === 0 ? 'border-b-[#3584e4] border-r-[#262c2c] bg-[#3584e4] font-bold text-white' : 'border-[#bdbcba] bg-[#e1e0df] font-normal text-[#3d3d3d]')
              }
            >
              {name}
            </th>
          ))}
        </tr>
      </thead>
      <tbody>
        {ROW_HEIGHTS.map((_, i) => (
          <SheetRow key={i} r={i + 1} />
        ))}
      </tbody>
    </table>
  );
}

/* ---------- side bar, tabs, status ---------- */

function SideBar() {
  const btn = 'flex h-[29px] w-full items-center justify-center';
  return (
    <aside className="relative flex w-[39px] shrink-0 flex-col border-l border-[#cfccc9] pt-px">
      <button type="button" aria-label="Sidebar settings" className={btn}>
        <Svg className="size-[15px]"><path d="M4 6h16M4 12h16M4 18h16" strokeWidth="2.400" stroke="#2e3436" /></Svg>
      </button>
      <button type="button" aria-label="Properties" className={btn}>
        <Svg className="size-[15px]">
          <path d="M1.500 2h21v20h-21z" fill="#fff" />
          <path d="M1 3h22" strokeWidth="4" />
          <path d="M5 11h14M5 16h14M14 8l-2 5M12 14l-3 5M19 11l-4-2M5 16l4 2" stroke={BLUE} strokeWidth="1.600" />
        </Svg>
      </button>
      <button type="button" aria-label="Styles" className={btn}>
        <Svg className="size-[16px]">
          <path d="M1.500 17 7.500 2h2L14 14M4 12h9" strokeWidth="2.200" />
          <path d="M22.500 6.500c-4 2-7 5-8.500 8.500l2.500 2c3-3 5.500-6 6-10.500z" fill="#fff" />
          <path d="M14 15c-3 0-3.500 4-7 6 4 2.500 9 1 9.500-4z" fill="#55a9e2" stroke="#1c6fae" />
        </Svg>
      </button>
      <button type="button" aria-label="Gallery" className={btn}>
        <Svg className="size-[16px]">
          <path d="M1.500 20.500v-17h6l2 2.500h13v14.500z" fill="#f9c47e" stroke="#ed8733" strokeWidth="1.600" />
          <path d="M8.500 9.500h14v12h-14z" fill="#fff" />
          <path d="m9 21 4-6 3 3 3-3 3 4v2z" fill="#1c79b8" stroke="#1c79b8" />
          <path d="M17 12h3v2h-3z" fill={BLUE} stroke="none" />
        </Svg>
      </button>
      <button type="button" aria-label="Navigator" className={btn}>
        <Svg className="size-[15px]">
          <circle cx="12" cy="12" r="10.500" fill="#fff" />
          <path d="m18 6-3.500 8L6 18l3.500-8z" fill={BLUE} stroke={BLUE} />
          <circle cx="12" cy="12" r="1.800" fill="#fff" stroke="none" />
        </Svg>
      </button>
      <button type="button" aria-label="Functions" className={btn + " font-['Liberation_Serif',serif] text-[17px] leading-none text-[#1e8bcd] italic"}>
        fx
      </button>
      <button type="button" aria-label="Hide sidebar" className="absolute top-[269px] -left-px flex h-[50px] w-[5px] items-center justify-center bg-[#8f8e8d]">
        <svg viewBox="0 0 3 5" className="h-[5px] w-[3px]" fill="#fff" aria-hidden="true">
          <path d="M0 0v5l3-2.500z" />
        </svg>
      </button>
    </aside>
  );
}

function TabBar() {
  return (
    <div className="flex h-[16px] items-stretch text-[8px]">
      <div className="flex w-[60px] shrink-0 items-center">
        <svg viewBox="0 0 60 14" className="ml-[6px] h-[14px] w-[60px] shrink-0" fill="none" stroke="#cbc9c7" aria-hidden="true">
          <path d="M.500 1v12M8 2 2.500 7 8 12M12 3 7 7l5 4M20 3l-5 4 5 4zM26 3l-5 4 5 4zM33 3l5 4-5 4zM39 3l5 4-5 4zM47 3l5 4-5 4M52 2l5.500 5L52 12M59.500 1v12" />
        </svg>
      </div>
      <button type="button" aria-label="Add sheet" className="ml-[14px] flex w-[14px] items-center">
        <svg viewBox="0 0 14 14" className="size-[14px]" aria-hidden="true">
          <path d="M.500.500h8l3 3v10h-11z" fill="#fff" stroke="#d0cecb" strokeWidth=".6" />
          <circle cx="10" cy="7.500" r="1.700" fill="none" stroke="#2a5db0" strokeWidth="1.300" />
          <path d="M10 4.500v1.500M10 9v1.500M7.500 7.500h1M11.500 7.500h1" stroke="#2a5db0" strokeWidth=".8" />
        </svg>
      </button>
      <div role="tablist" className="ml-[4px] flex items-stretch">
        <button type="button" role="tab" aria-selected="true" className="border-b-2 border-[#8f8e8d] bg-white px-[7px] font-bold">
          Fattura
        </button>
        {['Registro Fatture', 'Scadenziario', 'Istruzioni'].map((t) => (
          <button key={t} type="button" role="tab" aria-selected="false" className="flex items-center">
            <span className="px-[10px]">{t}</span>
            <span className="h-[8px] w-px bg-[#cfccc9]" />
          </button>
        ))}
      </div>
    </div>
  );
}

function StatusBar() {
  const cell = 'flex items-center border-r border-[#e0dedc]';
  return (
    <footer className="grid h-[17px] grid-cols-[196fr_174fr_201fr_185fr_46px_30px_20px_20px_199fr_97px_32px] border-t border-[#cfccc9] text-[8px]">
      <div className={cell + ' gap-[9px] pl-[6px]'}>
        <Svg className="size-[12px]">
          <path d="M1.500 1.500h21v21h-21zM6 2v8h12V2M6 22v-7h12v7" stroke="#9a9997" strokeWidth="1.800" />
        </Svg>
        <span>Sheet 1 of 4</span>
      </div>
      <div className={cell} />
      <div className={cell + ' pl-[5px]'}>PageStyle_Fattura</div>
      <div className={cell + ' justify-center'}>English (USA)</div>
      <div className={cell} />
      <div className={cell + ' justify-center'}>
        <svg viewBox="0 0 20 12" className="h-[12px] w-[20px]" fill="none" aria-hidden="true">
          <path d="M.500 3.500h11v5H.500z" stroke="#4aa3d8" fill="#fff" />
          <path d="M14.500.500h4M14.500 11.500h4M16.500.500v11" stroke="#2e3436" />
        </svg>
      </div>
      <div className={cell} />
      <div className={cell} />
      <div className={cell + ' justify-center'}>Average: ; Sum: 0</div>
      <div className={cell + ' justify-between px-[6px]'}>
        <button type="button" aria-label="Zoom out" className="flex h-full w-[8px] items-center">
          <span className="h-[2px] w-[7px] bg-[#2e3436]" />
        </button>
        <input
          type="range"
          aria-label="Zoom"
          min={0}
          max={100}
          defaultValue={50}
          className="h-[8px] w-[65px] appearance-none bg-[linear-gradient(#a5a3a1,#a5a3a1)] bg-[length:100%_1px] bg-center bg-no-repeat [&::-webkit-slider-thumb]:h-[7px] [&::-webkit-slider-thumb]:w-[3px] [&::-webkit-slider-thumb]:appearance-none [&::-webkit-slider-thumb]:border [&::-webkit-slider-thumb]:border-[#4a4a4a] [&::-webkit-slider-thumb]:bg-white"
        />
        <button type="button" aria-label="Zoom in" className="flex h-full w-[8px] items-center">
          <Svg className="size-[7px]"><path d="M12 1v22M1 12h22" strokeWidth="5" /></Svg>
        </button>
      </div>
      <div className="flex items-center justify-center">100%</div>
    </footer>
  );
}

export default function App() {
  return (
    <div className="flex h-screen flex-col overflow-hidden bg-[#f6f5f4] font-['Noto_Sans',sans-serif] text-[#2e3436]">
      <MenuBar />
      <StandardBar />
      <FormatBar />
      <div className="flex min-h-0 flex-1">
        <main className="flex min-w-0 flex-1 flex-col">
          <FormulaBar />
          <div className="flex min-h-0 flex-1">
            <div className="min-w-0 flex-1 overflow-hidden bg-white">
              <Sheet />
            </div>
            <div className="w-[9px] shrink-0 bg-[#cdcdcd] p-px">
              <div className="h-[39%] w-[6px] rounded-full bg-[#7f7f7f]" />
            </div>
          </div>
          <div className="flex h-[10px] pr-[9px]">
            <div className="flex flex-1 items-center bg-[#cdcdcd] pl-[2px]">
              <div className="h-[6px] w-[47%] rounded-full bg-[#7f7f7f]" />
            </div>
          </div>
          <TabBar />
        </main>
        <SideBar />
      </div>
      <StatusBar />
    </div>
  );
}
